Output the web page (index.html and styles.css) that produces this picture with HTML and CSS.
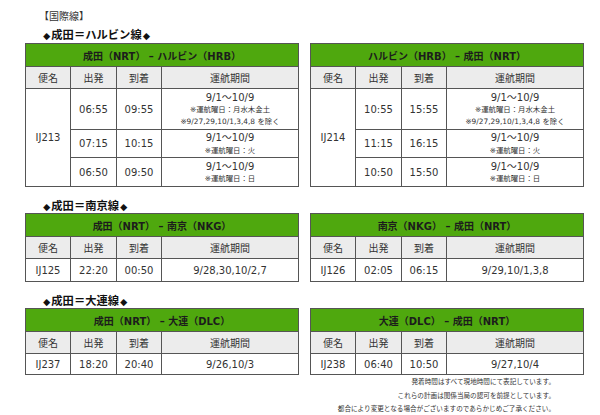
FILE: index.html
```html
<!DOCTYPE html>
<html lang="ja">
<head>
<meta charset="utf-8">
<link rel="stylesheet" href="styles.css">
</head>
<body>
<div class="page">
  <div class="intl">【国際線】</div>

  <div class="title t1"><span class="dia">◆</span>成田＝ハルビン線<span class="dia">◆</span></div>
  <div class="pair">
    <table class="tt">
      <colgroup><col class="c1"><col class="c2"><col class="c3"><col class="c4"></colgroup>
      <tr class="route"><th colspan="4">成田（NRT） – ハルビン（HRB）</th></tr>
      <tr class="cols"><td>便名</td><td>出発</td><td>到着</td><td>運航期間</td></tr>
      <tr class="r41"><td rowspan="3">IJ213</td><td>06:55</td><td>09:55</td><td><div class="per">9/1～10/9</div><div class="nt">※運航曜日：月水木金土</div><div class="nt">※9/27,29,10/1,3,4,8 を除く</div></td></tr>
      <tr class="r28"><td>07:15</td><td>10:15</td><td><div class="per">9/1～10/9</div><div class="nt">※運航曜日：火</div></td></tr>
      <tr class="r29"><td>06:50</td><td>09:50</td><td><div class="per">9/1～10/9</div><div class="nt">※運航曜日：日</div></td></tr>
    </table>
    <table class="tt">
      <colgroup><col class="c1"><col class="c2"><col class="c3"><col class="c4"></colgroup>
      <tr class="route"><th colspan="4">ハルビン（HRB） – 成田（NRT）</th></tr>
      <tr class="cols"><td>便名</td><td>出発</td><td>到着</td><td>運航期間</td></tr>
      <tr class="r41"><td rowspan="3">IJ214</td><td>10:55</td><td>15:55</td><td><div class="per">9/1～10/9</div><div class="nt">※運航曜日：月水木金土</div><div class="nt">※9/27,29,10/1,3,4,8 を除く</div></td></tr>
      <tr class="r28"><td>11:15</td><td>16:15</td><td><div class="per">9/1～10/9</div><div class="nt">※運航曜日：火</div></td></tr>
      <tr class="r29"><td>10:50</td><td>15:50</td><td><div class="per">9/1～10/9</div><div class="nt">※運航曜日：日</div></td></tr>
    </table>
  </div>

  <div class="title t2"><span class="dia">◆</span>成田＝南京線<span class="dia">◆</span></div>
  <div class="pair">
    <table class="tt">
      <colgroup><col class="c1"><col class="c2"><col class="c3"><col class="c4"></colgroup>
      <tr class="route"><th colspan="4">成田（NRT） – 南京（NKG）</th></tr>
      <tr class="cols"><td>便名</td><td>出発</td><td>到着</td><td>運航期間</td></tr>
      <tr class="r23"><td>IJ125</td><td>22:20</td><td>00:50</td><td>9/28,30,10/2,7</td></tr>
    </table>
    <table class="tt">
      <colgroup><col class="c1"><col class="c2"><col class="c3"><col class="c4"></colgroup>
      <tr class="route"><th colspan="4">南京（NKG） – 成田（NRT）</th></tr>
      <tr class="cols"><td>便名</td><td>出発</td><td>到着</td><td>運航期間</td></tr>
      <tr class="r23"><td>IJ126</td><td>02:05</td><td>06:15</td><td>9/29,10/1,3,8</td></tr>
    </table>
  </div>

  <div class="title t3"><span class="dia">◆</span>成田＝大連線<span class="dia">◆</span></div>
  <div class="pair">
    <table class="tt">
      <colgroup><col class="c1"><col class="c2"><col class="c3"><col class="c4"></colgroup>
      <tr class="route"><th colspan="4">成田（NRT） – 大連（DLC）</th></tr>
      <tr class="cols"><td>便名</td><td>出発</td><td>到着</td><td>運航期間</td></tr>
      <tr class="r21"><td>IJ237</td><td>18:20</td><td>20:40</td><td>9/26,10/3</td></tr>
    </table>
    <table class="tt">
      <colgroup><col class="c1"><col class="c2"><col class="c3"><col class="c4"></colgroup>
      <tr class="route"><th colspan="4">大連（DLC） – 成田（NRT）</th></tr>
      <tr class="cols"><td>便名</td><td>出発</td><td>到着</td><td>運航期間</td></tr>
      <tr class="r21"><td>IJ238</td><td>06:40</td><td>10:50</td><td>9/27,10/4</td></tr>
    </table>
  </div>

  <div class="notes">
    <p>発着時間はすべて現地時間にて表記しています。</p>
    <p>これらの計画は関係当局の認可を前提としています。</p>
    <p>都合により変更となる場合がございますのであらかじめご了承ください。</p>
  </div>
</div>
</body>
</html>
```

FILE: styles.css
```css
html, body {
  margin: 0;
  padding: 0;
  background: #ffffff;
}
body {
  width: 600px;
  height: 415px;
  overflow: hidden;
  font-family: "DejaVu Sans", "Noto Sans CJK JP", sans-serif;
  color: #333333;
}
.page {
  padding: 9px 0 0 25px;
}
.intl {
  font-family: "Noto Sans CJK JP", sans-serif;
  font-size: 10px;
  line-height: 14px;
  height: 14px;
  margin-left: 14px;
  color: #333;
}
.title {
  font-family: "Noto Sans CJK JP", sans-serif;
  font-weight: bold;
  font-size: 11.3px;
  line-height: 14px;
  height: 14px;
  margin-left: 17px;
  color: #111;
}
.dia {
  font-family: "DejaVu Sans", sans-serif;
  font-weight: normal;
  font-size: 9.5px;
  vertical-align: 0.5px;
  margin: 0 1px;
}
.t1 { margin-top: 4px; margin-bottom: 2px; }
.t2 { margin-top: 11px; margin-bottom: 1px; }
.t3 { margin-top: 11px; margin-bottom: 1px; }
.pair {
  display: flex;
  gap: 11px;
  width: 560px;
}
.tt {
  border-collapse: collapse;
  table-layout: fixed;
  width: 274px;
  text-align: center;
}
.c1, .c3 { width: 45px; }
.c2 { width: 46px; }
.tt td, .tt th {
  border: 1px solid #555555;
  padding: 0;
  vertical-align: middle;
  white-space: nowrap;
}
.route th {
  background: #4fa80e;
  height: 22px;
  font-size: 10px;
  font-weight: bold;
  color: #1c1c1c;
  font-family: "DejaVu Sans", "Noto Sans CJK JP", sans-serif;
}
.cols td {
  background: #ececec;
  height: 21px;
  font-family: "Noto Sans CJK JP", sans-serif;
  font-size: 9.5px;
  color: #333;
}
.tt td {
  font-size: 10px;
  color: #333;
}
.r41 td { height: 40px; }
.r28 td { height: 27px; }
.r29 td { height: 28px; }
.r23 td { height: 22px; }
.r21 td { height: 20px; }
.per {
  font-size: 10px;
  line-height: 13.5px;
}
.nt {
  font-size: 7.4px;
  line-height: 11.5px;
  color: #333;
}
.notes {
  width: 530px;
  text-align: right;
  font-family: "Noto Sans CJK JP", sans-serif;
  font-size: 6.6px;
  color: #333;
  margin-top: 0;
}
.notes p {
  margin: 0;
  line-height: 13.5px;
}
```
